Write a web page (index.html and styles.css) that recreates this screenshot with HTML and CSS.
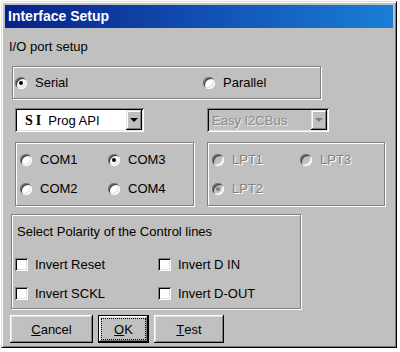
FILE: index.html
```html
<!DOCTYPE html>
<html lang="en">
<head>
    <meta charset="UTF-8">
    <title>Interface Setup</title>
    <link rel="stylesheet" href="styles.css">
</head>
<body>
    <div class="window">
        <div class="titlebar">Interface Setup</div>

        <div class="caption">I/O port setup</div>

        <!-- Port type -->
        <div class="group port-group">
            <label class="option"><span class="radio checked"></span>Serial</label>
            <label class="option"><span class="radio"></span>Parallel</label>
        </div>

        <!-- Drivers -->
        <div class="combo-row">
            <div class="combo prog">
                <span class="combo-text"><span class="si">SI</span>Prog API</span>
                <span class="drop"><span class="arrow"></span></span>
            </div>
            <div class="combo bus disabled">
                <span class="combo-text">Easy I2CBus</span>
                <span class="drop"><span class="arrow"></span></span>
            </div>
        </div>

        <!-- Port numbers -->
        <div class="ports">
            <div class="group port-list com-group">
                <label class="option"><span class="radio"></span>COM1</label>
                <label class="option"><span class="radio checked"></span>COM3</label>
                <label class="option"><span class="radio"></span>COM2</label>
                <label class="option"><span class="radio"></span>COM4</label>
            </div>
            <div class="group port-list lpt-group disabled">
                <label class="option"><span class="radio"></span>LPT1</label>
                <label class="option"><span class="radio"></span>LPT3</label>
                <label class="option"><span class="radio checked"></span>LPT2</label>
            </div>
        </div>

        <!-- Polarity -->
        <div class="group polarity">
            <div class="polarity-title">Select Polarity of the Control lines</div>
            <div class="checks">
                <label class="option"><span class="check"></span>Invert Reset</label>
                <label class="option"><span class="check"></span>Invert D IN</label>
                <label class="option"><span class="check"></span>Invert SCKL</label>
                <label class="option"><span class="check"></span>Invert D-OUT</label>
            </div>
        </div>

        <div class="buttons">
            <button class="btn btn-cancel"><span><u>C</u>ancel</span></button>
            <button class="btn btn-ok default"><span class="focus"><u>O</u>K</span></button>
            <button class="btn btn-test"><span><u>T</u>est</span></button>
        </div>
    </div>
</body>
</html>
```

FILE: styles.css
```css
body {
    margin: 0;
    background: #fff;
    font-family: "Liberation Sans", Arial, sans-serif;
    font-size: 13px;
    line-height: 15px;
    color: #000;
}
.window {
    width: 396px;
    height: 347px;
    margin: 1px 0 0 1px;
    box-sizing: border-box;
    padding: 3px;
    background: #c0c0c0;
    border: 1px solid;
    border-color: #dfdfdf #000 #000 #dfdfdf;
    box-shadow: inset 1px 1px #fff, inset -1px -1px #808080;
}
.titlebar {
    height: 23px;
    line-height: 23px;
    padding-left: 3px;
    font-weight: bold;
    font-size: 14px;
    color: #fff;
    background: linear-gradient(to right, #08208a, #1a7ed6);
}
.caption {
    margin: 11px 0 0 4px;
}
.group {
    box-sizing: border-box;
    border: 1px solid #808080;
    box-shadow: inset 1px 1px #fff, 1px 1px #fff;
}
.option {
    display: flex;
    align-items: center;
    white-space: nowrap;
}
.radio {
    width: 12px;
    height: 12px;
    margin-right: 8px;
    flex-shrink: 0;
    border-radius: 50%;
    background: #fff;
    display: grid;
    place-items: center;
    box-shadow: inset 1px 1px #808080, inset -1px -1px #fff, inset 2px 2px #404040, inset -2px -2px #dfdfdf;
}
.radio.checked::after {
    content: "";
    width: 4px;
    height: 4px;
    border-radius: 50%;
    background: #000;
}
.check {
    width: 13px;
    height: 13px;
    margin-right: 7px;
    flex-shrink: 0;
    background: #fff;
    box-shadow: inset 1px 1px #808080, inset -1px -1px #fff, inset 2px 2px #000, inset -2px -2px #dfdfdf;
}
.port-group {
    width: 309px;
    height: 33px;
    margin: 12px 0 0 7px;
    padding-left: 2px;
    display: grid;
    grid-template-columns: 188px auto;
    align-items: center;
}

/* combo boxes */
.combo-row {
    margin: 9px 0 0 10px;
    display: flex;
    gap: 63px;
}
.combo {
    height: 24px;
    box-sizing: border-box;
    padding: 2px;
    display: flex;
    background: #fff;
    box-shadow: inset 1px 1px #808080, inset -1px -1px #fff, inset 2px 2px #000, inset -2px -2px #dfdfdf;
}
.prog {
    width: 129px;
}
.bus {
    width: 122px;
}
.combo-text {
    flex: 1;
    display: flex;
    align-items: center;
    padding-left: 8px;
}
.bus .combo-text {
    padding-left: 3px;
}
.si {
    font-family: "Liberation Serif", "Times New Roman", serif;
    font-weight: bold;
    font-size: 14px;
    letter-spacing: 3px;
    margin-right: 4px;
}
.drop {
    width: 16px;
    display: flex;
    align-items: center;
    justify-content: center;
    background: #c0c0c0;
    box-shadow: inset -1px -1px #000, inset 1px 1px #dfdfdf, inset -2px -2px #808080, inset 2px 2px #fff;
}
.arrow {
    width: 0;
    height: 0;
    border-left: 4px solid transparent;
    border-right: 4px solid transparent;
    border-top: 4px solid #000;
}
.combo.disabled {
    background: #c0c0c0;
}
.combo.disabled .combo-text {
    color: #8c8c8c;
    text-shadow: 1px 1px 0 #e8e8e8;
}
.combo.disabled .arrow {
    border-top-color: #808080;
}

/* COM / LPT */
.ports {
    margin: 10px 0 0 10px;
    display: flex;
    gap: 13px;
}
.port-list {
    height: 64px;
    padding: 9px 0 9px 4px;
    display: grid;
    grid-template-columns: 88px auto;
    row-gap: 14px;
}
.com-group {
    width: 179px;
}
.lpt-group {
    width: 178px;
}
.disabled .option {
    color: #808080;
    text-shadow: 1px 1px 0 #fff;
}
.disabled .radio {
    background: #c0c0c0;
}
.disabled .radio.checked::after {
    background: #808080;
}

/* polarity */
.polarity {
    width: 290px;
    height: 95px;
    margin: 8px 0 0 6px;
    padding: 9px 0 0 3px;
}
.polarity-title {
    margin-left: 2px;
}
.checks {
    margin-top: 18px;
    display: grid;
    grid-template-columns: 143px auto;
    row-gap: 14px;
}

/* buttons */
.buttons {
    margin: 6px 0 0 5px;
    display: flex;
    gap: 5px;
}
.btn {
    height: 28px;
    box-sizing: border-box;
    padding: 3px;
    border: none;
    background: #c0c0c0;
    font-family: inherit;
    font-size: 13px;
    color: #000;
    display: flex;
    box-shadow: inset -1px -1px #000, inset 1px 1px #fff, inset -2px -2px #808080, inset 2px 2px #dfdfdf;
}
.btn span {
    flex: 1;
    display: flex;
    align-items: center;
    justify-content: center;
}
.btn-cancel {
    width: 83px;
}
.btn-ok {
    width: 51px;
}
.btn-test {
    width: 70px;
}
.btn.default {
    border: 1px solid #000;
    padding: 2px;
}
.btn .focus {
    border: 1px dotted #000;
}
```
